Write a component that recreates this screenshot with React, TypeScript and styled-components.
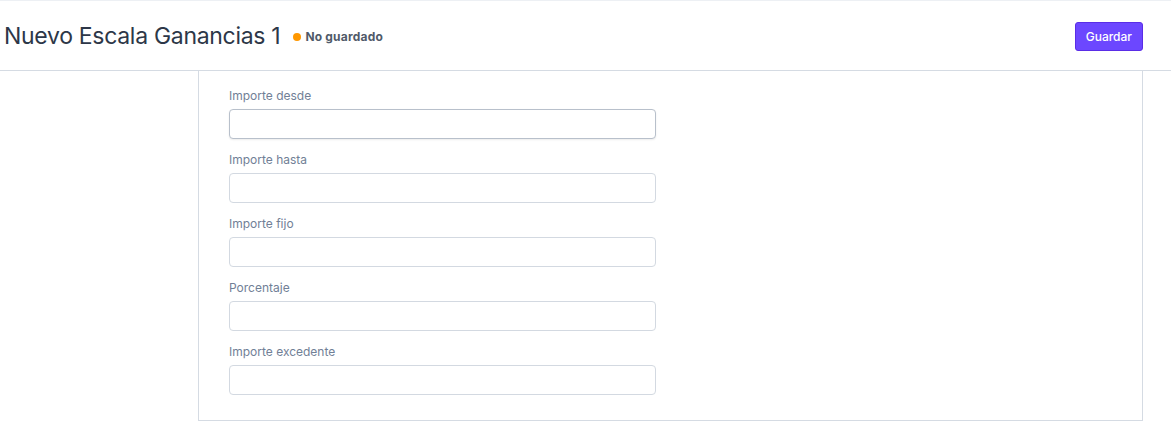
import React from "react";
import styled, { createGlobalStyle } from "styled-components";

const GlobalStyle = createGlobalStyle`
	body {
		margin: 0;
		background: #ffffff;
		font-family: Inter, "Liberation Sans", Arial, sans-serif;
	}
`;

const Header = styled.header`
	height: 69px;
	display: flex;
	align-items: center;
	justify-content: space-between;
	padding: 0 28px 0 4px;
	border-top: 1px solid #edf0f4;
	border-bottom: 1px solid #d5dbe3;
`;

const TitleGroup = styled.div`
	display: flex;
	align-items: center;
	gap: 13px;
`;

const Title = styled.h1`
	margin: 0;
	font-size: 23px;
	font-weight: 400;
	color: #2d3748;
	letter-spacing: -0.3px;
`;

const Status = styled.span`
	display: flex;
	align-items: center;
	gap: 4px;
	font-size: 12px;
	font-weight: 700;
	color: #505a69;
	letter-spacing: 0.2px;
	padding-top: 2px;
`;

const Dot = styled.span`
	width: 8px;
	height: 8px;
	border-radius: 50%;
	background: #ff9800;
`;

const SaveButton = styled.button`
	height: 29px;
	padding: 0 10px;
	border: 1px solid #5a2de6;
	border-radius: 3px;
	background: #6c47ff;
	color: #ffffff;
	font-family: inherit;
	font-size: 12px;
	font-weight: 500;
	cursor: pointer;
	margin-top: 2px;
`;

const Panel = styled.section`
	margin-left: 198px;
	width: 945px;
	box-sizing: border-box;
	border: 1px solid #d5dbe3;
	border-top: none;
	padding: 15px 30px 14px;
`;

const Field = styled.div`
	display: flex;
	flex-direction: column;
	gap: 5px;
	margin-bottom: 11px;
	width: 427px;
`;

const Label = styled.label`
	font-size: 12px;
	line-height: 16px;
	padding-top: 2px;
	color: #718096;
`;

const Input = styled.input<{ $active?: boolean }>`
	height: 30px;
	box-sizing: border-box;
	border: 1px solid ${(p) => (p.$active ? "#b8c0cb" : "#d3d9e1")};
	border-radius: 4px;
	box-shadow: ${(p) => (p.$active ? "0 1px 2px rgba(0,0,0,0.08)" : "none")};
	padding: 0 10px;
	font-family: inherit;
	font-size: 13px;
	outline: none;
`;

const fields = [
	"Importe desde",
	"Importe hasta",
	"Importe fijo",
	"Porcentaje",
	"Importe excedente",
];

export default function App() {
	return (
		<>
			<GlobalStyle />
			<Header>
				<TitleGroup>
					<Title>Nuevo Escala Ganancias 1</Title>
					<Status>
						<Dot />
						No guardado
					</Status>
				</TitleGroup>
				<SaveButton>Guardar</SaveButton>
			</Header>
			<Panel>
				{fields.map((name, idx) => (
					<Field key={name}>
						<Label>{name}</Label>
						<Input $active={idx === 0} />
					</Field>
				))}
			</Panel>
		</>
	);
}
